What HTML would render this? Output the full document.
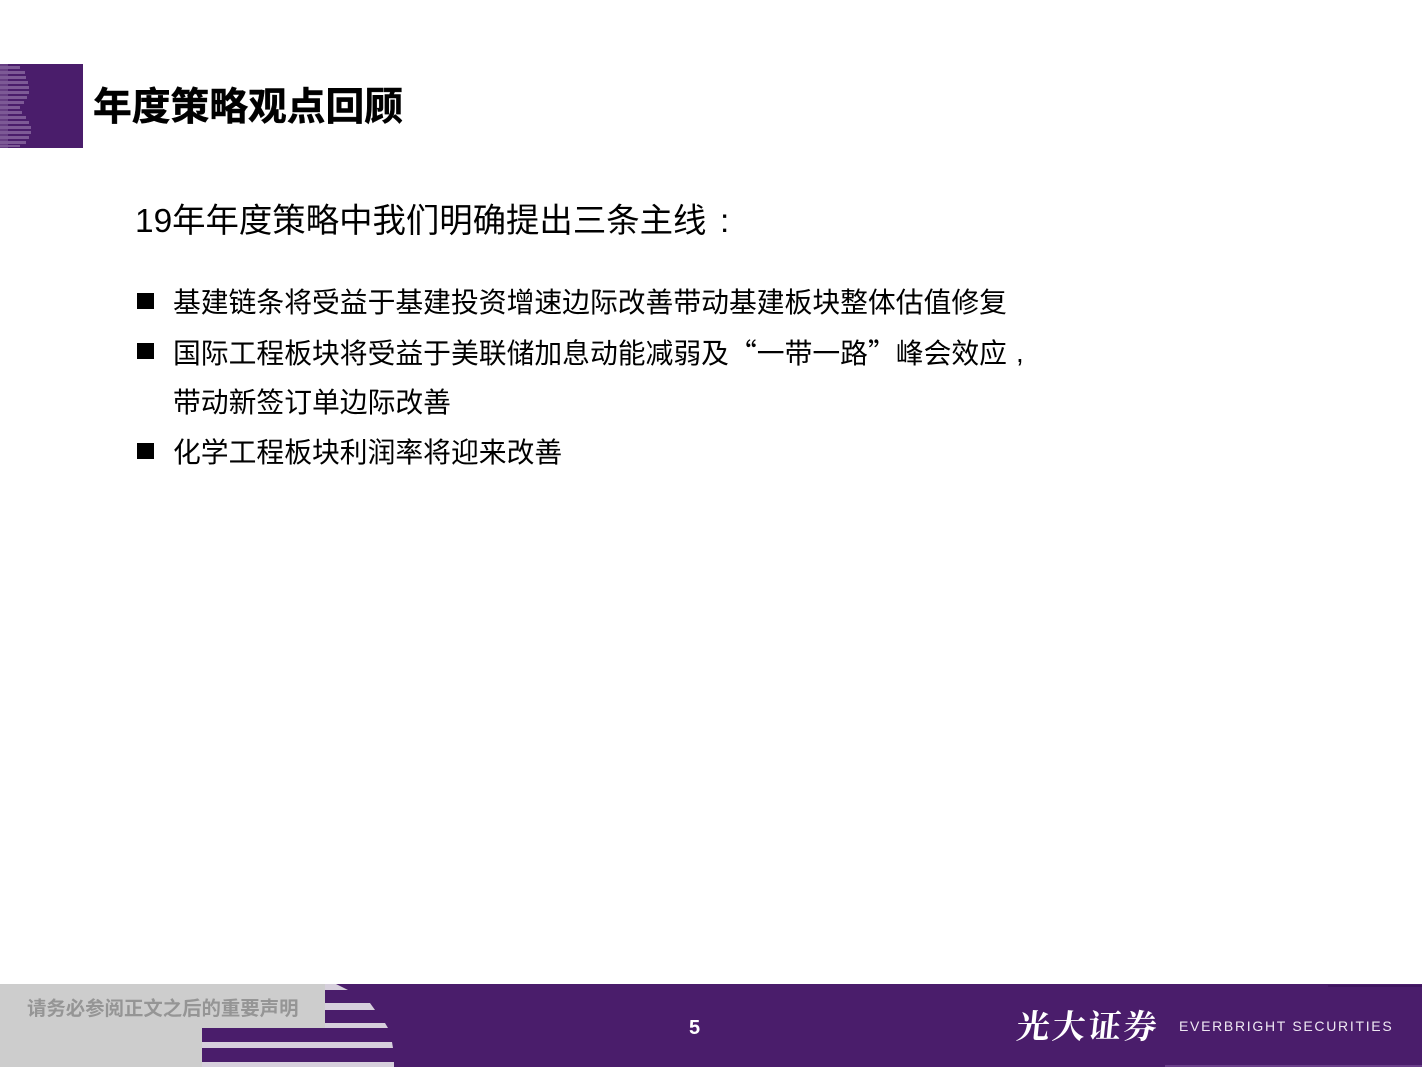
<!DOCTYPE html>
<html lang="zh">
<head>
<meta charset="utf-8">
<style>
html,body{margin:0;padding:0;background:#fff}
#p{position:relative;width:1422px;height:1067px;overflow:hidden;background:#fff;font-family:"Liberation Sans","Noto Sans CJK SC",sans-serif;color:#000}
.t{position:absolute;white-space:nowrap;line-height:1}
.b{position:absolute;left:137px;width:17px;height:16px;background:#000}
.q{font-family:"Noto Sans CJK SC",sans-serif}
svg{position:absolute;left:0;top:0}
</style>
</head>
<body>
<div id="p">
<svg width="1422" height="1067" viewBox="0 0 1422 1067">
  <rect x="0" y="64" width="83" height="84" fill="#4a1d6b"/>
  <g fill="#7d5a96">
    <rect x="0" y="64" width="8" height="84" opacity=".55"/>
    <rect x="0" y="66" width="20" height="3"/>
    <rect x="0" y="71" width="25" height="3"/>
    <rect x="0" y="76" width="26" height="3"/>
    <rect x="0" y="81" width="28" height="3"/>
    <rect x="0" y="86" width="29" height="3"/>
    <rect x="0" y="91" width="29" height="3"/>
    <rect x="0" y="96" width="27" height="3"/>
    <rect x="0" y="101" width="24" height="3"/>
    <rect x="0" y="106" width="20" height="3"/>
    <rect x="0" y="111" width="22" height="3"/>
    <rect x="0" y="116" width="26" height="3"/>
    <rect x="0" y="121" width="29" height="3"/>
    <rect x="0" y="126" width="31" height="3"/>
    <rect x="0" y="131" width="31" height="3"/>
    <rect x="0" y="136" width="29" height="3"/>
    <rect x="0" y="141" width="26" height="3"/>
    <rect x="0" y="145" width="20" height="2"/>
  </g>
  <rect x="0" y="984" width="1422" height="83" fill="#4a1d6b"/>
  <rect x="0" y="984" width="325" height="44" fill="#cdcdcd"/>
  <rect x="0" y="1028" width="202" height="39" fill="#cdcdcd"/>
  <polygon points="325,984 336,984 348,990 325,990" fill="#d6cfdc"/>
  <polygon points="325,1003 370,1003 375,1010 325,1010" fill="#d6cfdc"/>
  <polygon points="325,1023 385,1023 388,1028 325,1028" fill="#d6cfdc"/>
  <polygon points="202,1042 392,1042 393,1048 202,1048" fill="#d6cfdc"/>
  <polygon points="202,1062 394,1062 394,1067 202,1067" fill="#d6cfdc"/>
  <rect x="1328" y="985" width="94" height="2" fill="#3f155f"/>
  <rect x="1165" y="1065" width="257" height="2" fill="#6a3f8a"/>
</svg>

<div class="t" style="left:93px;top:89px;font-size:38.75px;font-weight:700;-webkit-text-stroke:.5px #000">年度策略观点回顾</div>
<div class="t" style="left:135px;top:205px;font-size:33.4px">19年年度策略中我们明确提出三条主线</div>
<div class="t" style="left:720px;top:205px;font-size:33.4px">:</div>

<div class="b" style="top:293px"></div>
<div class="t" style="left:173px;top:289px;font-size:27.8px">基建链条将受益于基建投资增速边际改善带动基建板块整体估值修复</div>
<div class="b" style="top:343px"></div>
<div class="t" style="left:173px;top:339px;font-size:27.8px">国际工程板块将受益于美联储加息动能减弱及<span class="q">“</span>一带一路<span class="q">”</span>峰会效应</div>
<div class="t" style="left:1016px;top:339px;font-size:27.8px">,</div>
<div class="t" style="left:173px;top:389px;font-size:27.8px">带动新签订单边际改善</div>
<div class="b" style="top:443px"></div>
<div class="t" style="left:173px;top:439px;font-size:27.8px">化学工程板块利润率将迎来改善</div>

<div class="t" style="left:27px;top:1000px;font-size:19.4px;font-weight:700;color:#959595">请务必参阅正文之后的重要声明</div>
<div class="t" style="left:689px;top:1018px;font-size:20px;font-weight:700;color:#fff">5</div>
<div class="t" style="left:1017px;top:1008px;font-size:33px;font-weight:700;color:#fff;font-family:'Noto Serif CJK SC','Liberation Serif',serif;letter-spacing:2.7px;transform:skewX(-6deg)">光大证券</div>
<div class="t" style="left:1179px;top:1019px;font-size:14px;color:#efe8f3;letter-spacing:1.7px;font-family:'Liberation Sans',sans-serif">EVERBRIGHT SECURITIES</div>
</div>
</body>
</html>
